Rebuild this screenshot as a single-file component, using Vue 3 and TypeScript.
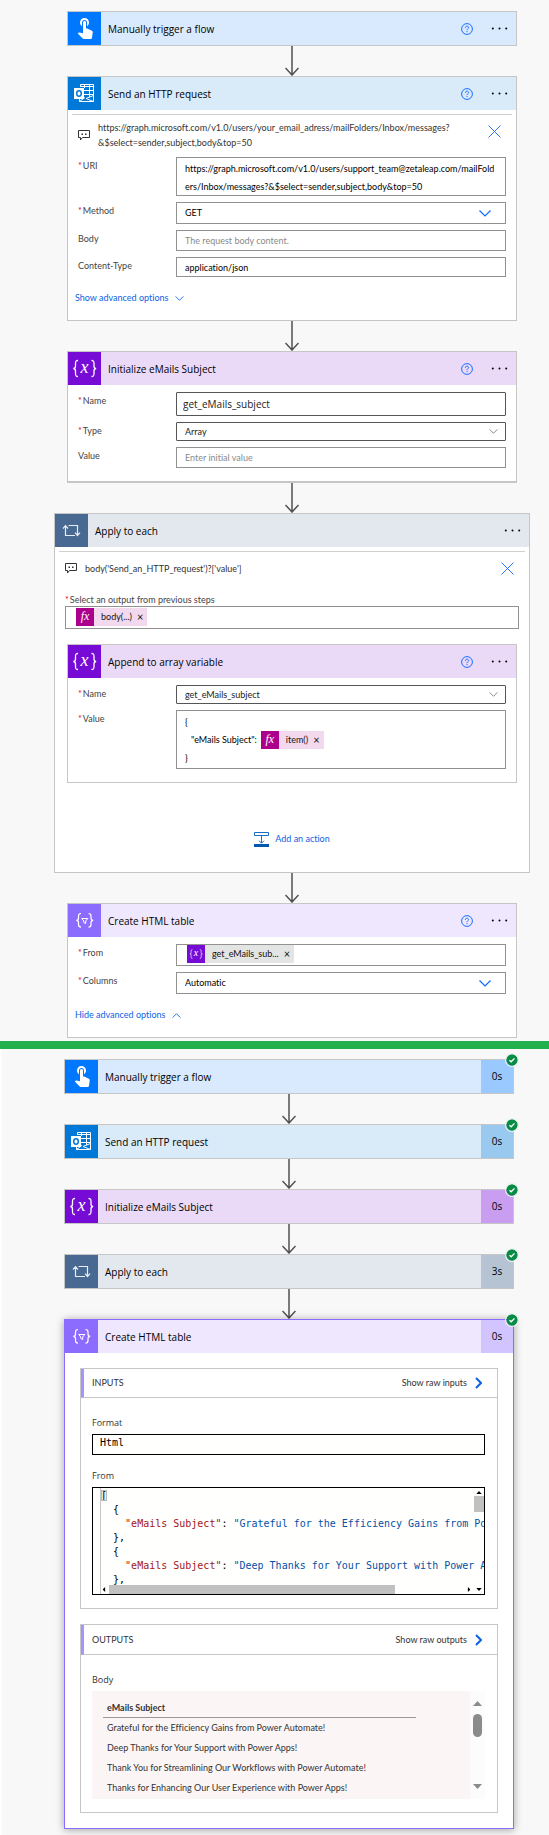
<script setup lang="ts">
import { ref } from 'vue'

interface RunStep {
  title: string
  tone: string
  icon: string
  duration: string
}

const uri = ref('https://graph.microsoft.com/v1.0/users/support_team@zetaleap.com/mailFolders/Inbox/messages?&$select=sender,subject,body&top=50')
const method = ref('GET')
const requestBody = ref('')
const contentType = ref('application/json')
const variableName = ref('get_eMails_subject')
const variableType = ref('Array')
const initialValue = ref('')
const targetVariable = ref('get_eMails_subject')
const columns = ref('Automatic')
const format = ref('Html')

const runSteps: RunStep[] = [
  { title: 'Manually trigger a flow', tone: 'trigger', icon: 'touch', duration: '0s' },
  { title: 'Send an HTTP request', tone: 'outlook', icon: 'outlook', duration: '0s' },
  { title: 'Initialize eMails Subject', tone: 'variable', icon: 'variable', duration: '0s' },
  { title: 'Apply to each', tone: 'control', icon: 'loop', duration: '3s' },
]

const payload = [
  'Grateful for the Efficiency Gains from Power Automate!',
  'Deep Thanks for Your Support with Power Apps!',
]

const subjects = [
  'Grateful for the Efficiency Gains from Power Automate!',
  'Deep Thanks for Your Support with Power Apps!',
  'Thank You for Streamlining Our Workflows with Power Automate!',
  'Thanks for Enhancing Our User Experience with Power Apps!',
]
</script>

<template>
  <svg class="sprite" aria-hidden="true">
    <symbol id="touch" viewBox="0 0 33 33">
      <path transform="translate(5 3)" fill="#fff" d="M9 11.24V7.5C9 6.12 10.12 5 11.5 5S14 6.12 14 7.5v3.74c1.21-.81 2-2.18 2-3.74C16 5.01 13.99 3 11.5 3S7 5.01 7 7.5c0 1.56.79 2.93 2 3.74zm9.84 4.63l-4.54-2.26c-.17-.07-.35-.11-.54-.11H13v-6c0-.83-.67-1.5-1.5-1.5S10 6.67 10 7.5v10.74l-3.43-.72c-.08-.01-.15-.03-.24-.03-.31 0-.59.13-.79.33l-.79.8 4.94 4.94c.27.27.65.44 1.06.44h6.79c.75 0 1.33-.55 1.44-1.28l.75-5.27c.01-.07.02-.14.02-.2 0-.62-.38-1.16-.91-1.38z" />
    </symbol>
    <symbol id="outlook" viewBox="0 0 33 33">
      <g fill="none" stroke="#fff" stroke-width="1">
        <path d="M12.5 10V7.500H25.500V24.500H11.500V22M12.500 9.500H25.500M16 13.500H25.500M16 17.500H25.500M16.500 7.500V11M21.500 7.500V20" />
        <path d="M11.500 24.500L17 20.500M25.500 18.500L18 21.500L25.500 24.500" />
      </g>
      <rect x="6" y="11" width="10" height="11" fill="#fff" />
      <ellipse cx="11" cy="16.500" rx="2.300" ry="2.700" fill="none" stroke="#0078d7" stroke-width="1.500" />
    </symbol>
    <symbol id="variable" viewBox="0 0 33 33">
      <g fill="none" stroke="#fff" stroke-width="1.300">
        <path d="M10 8.500C7.500 8.500 7.500 9.500 7.500 11.500V14C7.500 15.800 7 16.500 5.300 16.500C7 16.500 7.500 17.200 7.500 19V21.500C7.500 23.500 7.500 24.500 10 24.500" />
        <path d="M23.500 8.500C26 8.500 26 9.500 26 11.500V14C26 15.800 26.500 16.500 28.200 16.500C26.500 16.500 26 17.200 26 19V21.500C26 23.500 26 24.500 23.500 24.500" />
      </g>
      <text x="16.500" y="21" text-anchor="middle" fill="#fff" font-family="Liberation Serif, serif" font-style="italic" font-size="18">x</text>
    </symbol>
    <symbol id="loop" viewBox="0 0 33 33">
      <g fill="none" stroke="#e6edf5" stroke-width="1.200">
        <path d="M10.500 12V21.500H20M8 14.500L10.500 11.700L13 14.500" />
        <path d="M13.500 11.500H22.500V21.500M20 18.700L22.500 21.500L25 18.700" />
      </g>
    </symbol>
    <symbol id="filter" viewBox="0 0 33 33">
      <g fill="none" stroke="#fff" stroke-width="1.200">
        <path d="M13 9.500C11 9.500 10.500 10 10.500 12V14C10.500 15.600 10 16.300 8.300 16.300C10 16.300 10.500 17 10.500 18.600V20.500C10.500 22.500 11 23.200 13 23.200" />
        <path d="M20.500 9.500C22.500 9.500 23 10 23 12V14C23 15.600 23.500 16.300 25.200 16.300C23.500 16.300 23 17 23 18.600V20.500C23 22.500 22.500 23.200 20.500 23.200" />
        <path d="M13.700 14.500H19.800L17.700 17V19.500L15.800 18.500V17Z" stroke-width="1" />
      </g>
    </symbol>
    <symbol id="help" viewBox="0 0 12 12">
      <circle cx="6" cy="6" r="5.400" fill="none" stroke="#1a6dff" stroke-width="1" />
      <path d="M4.400 4.900C4.400 3.800 5.100 3.200 6 3.200S7.600 3.800 7.600 4.600C7.600 5.600 6 5.700 6 7.100" fill="none" stroke="#1a6dff" stroke-width="1" />
      <rect x="5.500" y="8.100" width="1" height="1" fill="#1a6dff" />
    </symbol>
    <symbol id="more" viewBox="0 0 17 3">
      <circle cx="1.800" cy="1.500" r="1" /><circle cx="8.500" cy="1.500" r="1" /><circle cx="15.200" cy="1.500" r="1" />
    </symbol>
    <symbol id="note" viewBox="0 0 12 11">
      <path d="M.500.500H11.500V7.500H4.500L2.500 10V7.500H.500Z" fill="none" stroke="#333" />
      <path d="M3.500 3.500H5V5H3.500ZM7 3.500H8.500V5H7Z" fill="#333" />
    </symbol>
    <symbol id="close" viewBox="0 0 13 13">
      <path d="M.500.500L12.500 12.500M12.500.500L.500 12.500" fill="none" stroke="#2f74f5" stroke-width="1" />
    </symbol>
    <symbol id="chevron" viewBox="0 0 12 7">
      <path d="M.500.500L6 6L11.500.500" fill="none" stroke="currentColor" stroke-width="1.200" />
    </symbol>
    <symbol id="arrow" viewBox="0 0 14 30">
      <path d="M7 0V29M.500 22L7 29L13.500 22" fill="none" stroke="#505050" stroke-width="1.500" />
    </symbol>
    <symbol id="check" viewBox="0 0 12 12">
      <circle cx="6" cy="6" r="5.700" fill="#078c46" />
      <path d="M3.500 6.200L5.200 7.800L8.500 4.400" fill="none" stroke="#fff" stroke-width="1.300" />
    </symbol>
    <symbol id="add" viewBox="0 0 15 15">
      <path d="M.500.500H14.500V3.500H.500ZM7.500 3.500V11M5 8.700L7.500 11.200L10 8.700" fill="none" stroke="#1a6fc4" />
      <rect y="12" width="15" height="3" fill="#0058b0" />
    </symbol>
    <symbol id="go" viewBox="0 0 7 12">
      <path d="M1 1L6 6L1 11" fill="none" stroke="#0b62e6" stroke-width="2" />
    </symbol>
    <symbol id="triangle" viewBox="0 0 9 5">
      <path d="M0 5L4.500 0L9 5Z" fill="currentColor" />
    </symbol>
  </svg>

  <main class="page">
    <section class="designer" aria-label="Flow designer">
      <article class="card trigger inset">
        <header class="head">
          <svg class="badge"><use href="#touch" /></svg>
          <h2>Manually trigger a flow</h2>
          <button class="icon-btn help" aria-label="Help"><svg><use href="#help" /></svg></button>
          <button class="icon-btn more" aria-label="More"><svg><use href="#more" /></svg></button>
        </header>
      </article>
      <svg class="arrow"><use href="#arrow" /></svg>

      <article class="card outlook inset">
        <header class="head">
          <svg class="badge"><use href="#outlook" /></svg>
          <h2>Send an HTTP request</h2>
          <button class="icon-btn help" aria-label="Help"><svg><use href="#help" /></svg></button>
          <button class="icon-btn more" aria-label="More"><svg><use href="#more" /></svg></button>
        </header>
        <div class="note">
          <svg class="note-icon"><use href="#note" /></svg>
          <p>https://graph.microsoft.com/v1.0/users/your_email_adress/mailFolders/Inbox/messages?<wbr />&amp;$select=sender,subject,body&amp;top=50</p>
          <button class="icon-btn close" aria-label="Delete comment"><svg><use href="#close" /></svg></button>
        </div>
        <div class="fields">
          <label class="required" for="uri">URI</label>
          <textarea id="uri" v-model="uri" class="box" rows="2"></textarea>
          <label class="required" for="method">Method</label>
          <div class="picker blue">
            <select id="method" v-model="method" class="box mid"><option>GET</option><option>POST</option></select>
            <svg><use href="#chevron" /></svg>
          </div>
          <label for="body">Body</label>
          <input id="body" v-model="requestBody" class="box" placeholder="The request body content." />
          <label for="ctype">Content-Type</label>
          <input id="ctype" v-model="contentType" class="box short" />
        </div>
        <button class="advanced">Show advanced options <svg><use href="#chevron" /></svg></button>
      </article>
      <svg class="arrow"><use href="#arrow" /></svg>

      <article class="card variable inset heavy">
        <header class="head">
          <svg class="badge"><use href="#variable" /></svg>
          <h2>Initialize eMails Subject</h2>
          <button class="icon-btn help" aria-label="Help"><svg><use href="#help" /></svg></button>
          <button class="icon-btn more" aria-label="More"><svg><use href="#more" /></svg></button>
        </header>
        <div class="fields padded">
          <label class="required" for="vname">Name</label>
          <input id="vname" v-model="variableName" class="box dark large" />
          <label class="required" for="vtype">Type</label>
          <div class="picker grey">
            <select id="vtype" v-model="variableType" class="box dark low"><option>Array</option><option>String</option></select>
            <svg><use href="#chevron" /></svg>
          </div>
          <label for="vvalue">Value</label>
          <input id="vvalue" v-model="initialValue" class="box" placeholder="Enter initial value" />
        </div>
      </article>
      <svg class="arrow"><use href="#arrow" /></svg>

      <article class="card control">
        <header class="head">
          <svg class="badge"><use href="#loop" /></svg>
          <h2>Apply to each</h2>
          <button class="icon-btn more" aria-label="More"><svg><use href="#more" /></svg></button>
        </header>
        <div class="note">
          <svg class="note-icon"><use href="#note" /></svg>
          <p>body('Send_an_HTTP_request')?['value']</p>
          <button class="icon-btn close" aria-label="Delete comment"><svg><use href="#close" /></svg></button>
        </div>
        <div class="source">
          <span id="source-label" class="required">Select an output from previous steps</span>
          <div class="box tokens tall" role="textbox" tabindex="0" aria-labelledby="source-label">
            <span class="token fx"><i>fx</i><span>body(...)</span><button aria-label="Remove body">×</button></span>
          </div>
        </div>

        <article class="card variable nested">
          <header class="head">
            <svg class="badge"><use href="#variable" /></svg>
            <h2>Append to array variable</h2>
            <button class="icon-btn help" aria-label="Help"><svg><use href="#help" /></svg></button>
            <button class="icon-btn more" aria-label="More"><svg><use href="#more" /></svg></button>
          </header>
          <div class="fields padded">
            <label class="required" for="aname">Name</label>
            <div class="picker grey">
              <select id="aname" v-model="targetVariable" class="box dark low"><option>get_eMails_subject</option></select>
              <svg><use href="#chevron" /></svg>
            </div>
            <span id="avalue-label" class="required">Value</span>
            <div class="box expression" role="textbox" tabindex="0" aria-labelledby="avalue-label">
              <div>{</div>
              <div class="entry">"eMails Subject": <span class="token fx"><i>fx</i><span>item()</span><button aria-label="Remove item">×</button></span></div>
              <div>}</div>
            </div>
          </div>
        </article>

        <button class="add"><svg><use href="#add" /></svg>Add an action</button>
      </article>
      <svg class="arrow"><use href="#arrow" /></svg>

      <article class="card table inset">
        <header class="head">
          <svg class="badge"><use href="#filter" /></svg>
          <h2>Create HTML table</h2>
          <button class="icon-btn help" aria-label="Help"><svg><use href="#help" /></svg></button>
          <button class="icon-btn more" aria-label="More"><svg><use href="#more" /></svg></button>
        </header>
        <div class="fields top">
          <span id="from-label" class="required">From</span>
          <div class="box tokens" role="textbox" tabindex="0" aria-labelledby="from-label">
            <span class="token var"><svg><use href="#variable" /></svg><span>get_eMails_sub...</span><button aria-label="Remove get_eMails_subject">×</button></span>
          </div>
          <label class="required" for="columns">Columns</label>
          <div class="picker blue">
            <select id="columns" v-model="columns" class="box mid"><option>Automatic</option><option>Custom</option></select>
            <svg><use href="#chevron" /></svg>
          </div>
        </div>
        <button class="advanced open">Hide advanced options <svg><use href="#chevron" /></svg></button>
      </article>
    </section>

    <section class="run" aria-label="Run history">
      <template v-for="step in runSteps" :key="step.title">
        <article class="card" :class="step.tone">
          <header class="head">
            <svg class="badge"><use :href="'#' + step.icon" /></svg>
            <h2>{{ step.title }}</h2>
            <span class="duration">{{ step.duration }}</span>
          </header>
          <svg class="status" role="img" aria-label="Succeeded"><use href="#check" /></svg>
        </article>
        <svg class="arrow"><use href="#arrow" /></svg>
      </template>

      <article class="card table selected">
        <header class="head">
          <svg class="badge"><use href="#filter" /></svg>
          <h2>Create HTML table</h2>
          <span class="duration">0s</span>
        </header>
        <svg class="status" role="img" aria-label="Succeeded"><use href="#check" /></svg>
        <div class="panels">
          <section class="panel">
            <header>
              <h3>INPUTS</h3>
              <a href="#raw-inputs">Show raw inputs<svg><use href="#go" /></svg></a>
            </header>
            <div class="content">
              <label for="format">Format</label>
              <input id="format" v-model="format" class="format" readonly />
              <h4>From</h4>
              <div class="editor">
                <pre><span class="bracket">[</span>
<template v-for="line in payload" :key="line">  {
    <span class="key">"eMails Subject"</span>: <span class="string">"{{ line }}"</span>
  },
</template>  {</pre>
                <div class="vbar"><svg><use href="#triangle" /></svg><i></i><svg class="down"><use href="#triangle" /></svg></div>
                <div class="hbar"><svg class="left"><use href="#triangle" /></svg><i></i><svg class="right"><use href="#triangle" /></svg></div>
              </div>
            </div>
          </section>

          <section class="panel">
            <header>
              <h3>OUTPUTS</h3>
              <a href="#raw-outputs">Show raw outputs<svg><use href="#go" /></svg></a>
            </header>
            <div class="content">
              <h4>Body</h4>
              <div class="result">
                <div class="sheet">
                  <table>
                    <thead><tr><th scope="col">eMails Subject</th></tr></thead>
                    <tbody><tr v-for="subject in subjects" :key="subject"><td>{{ subject }}</td></tr></tbody>
                  </table>
                </div>
                <div class="scroll"><svg><use href="#triangle" /></svg><i></i><svg class="down"><use href="#triangle" /></svg></div>
              </div>
            </div>
          </section>
        </div>
      </article>
    </section>
  </main>
</template>

<style>
body {
  margin: 0;
  background: #f8f8f8;
}
</style>

<style scoped>
* {
  box-sizing: border-box;
}
.sprite {
  display: none;
}
.page {
  font: 9px/18px Lato, "Open Sans", sans-serif;
  font-variant-ligatures: none;
  color: #333;
  background: #f8f8f8;
}
svg {
  display: block;
  flex: none;
}
button,
input,
select,
textarea {
  font: inherit;
  font-variant-ligatures: none;
  color: inherit;
  margin: 0;
}
button {
  border: 0;
  padding: 0;
  background: none;
}
h2,
h3,
h4,
p,
pre {
  margin: 0;
  font-weight: 400;
}
.designer {
  padding: 11px 19px 3px 54px;
  border-bottom: 8px solid #22b14c;
}
.run {
  padding: 10px 35px 6px 62px;
  border-left: 2px solid #fdfdfd;
}

/* cards */
.card {
  position: relative;
  border: 1px solid #c6c6c6;
  background: #fff;
}
.inset {
  margin: 0 13px;
}
.heavy {
  border-bottom-width: 2px;
}
.nested {
  margin: 15px 12px 0;
}
.trigger { --tint: #d9eaff; --solid: #0077ff; --mid: #99c9ff; }
.outlook { --tint: #d9eaf8; --solid: #0078d7; --mid: #99c9ef; }
.variable { --tint: #ebdaf7; --solid: #770bd6; --mid: #c99df0; }
.control { --tint: #e3e8ef; --solid: #486991; --mid: #b6c3d3; }
.table { --tint: #eee7fe; --solid: #8c6cff; --mid: #d1c4ff; }
.head {
  display: flex;
  align-items: center;
  height: 33px;
  background: var(--tint);
}
.badge {
  width: 33px;
  height: 33px;
  background: var(--solid);
}
.head h2 {
  flex: 1;
  padding-left: 7px;
  font-family: "Open Sans", sans-serif;
  font-size: 10px;
  color: #000;
}
.icon-btn {
  display: flex;
  align-items: center;
}
.help svg {
  width: 12px;
  height: 12px;
}
.more {
  margin: 0 8px 0 18px;
}
.more svg {
  width: 17px;
  height: 3px;
}
.arrow {
  width: 14px;
  height: 30px;
  margin: 0 auto;
}
.note {
  display: flex;
  align-items: center;
  margin: 4px 4px 0;
  padding: 5px 11px 7px 6px;
  border-top: 1px solid #cfcfcf;
  line-height: 15px;
}
.note-icon {
  width: 12px;
  height: 11px;
}
.note p {
  flex: 1;
  padding-left: 8px;
}
.close {
  height: 23px;
  align-self: flex-start;
}
.close svg {
  width: 13px;
  height: 13px;
}

/* form rows */
.fields {
  display: grid;
  grid-template-columns: 98px minmax(0, 1fr);
  gap: 6px 0;
  padding: 0 10px;
  align-items: start;
  color: #444;
}
.padded {
  padding: 7px 10px 13px;
}
.top {
  padding-top: 7px;
}
.required::before {
  content: "*";
  margin-right: 1px;
  color: #e00b1c;
}
.box {
  display: block;
  width: 100%;
  height: 21px;
  padding: 0 8px;
  border: 1px solid #919191;
  border-radius: 0;
  background: #fff;
  color: #000;
  outline: 0;
}
.box::placeholder {
  color: #8a8a8a;
  opacity: 1;
}
textarea.box {
  height: 39px;
  line-height: 18px;
  resize: none;
  overflow: hidden;
  word-break: break-all;
  padding: 2px 8px 0;
}
.dark {
  border-color: #555;
  border-radius: 1px;
  color: #222;
}
.large {
  height: 24px;
  padding: 0 6px;
  font-family: "Open Sans", sans-serif;
  font-size: 10px;
}
.mid {
  height: 22px;
}
.short {
  height: 20px;
}
.low {
  height: 19px;
}
select.box {
  appearance: none;
}
.picker {
  display: grid;
  align-items: center;
}
.picker > * {
  grid-area: 1 / 1;
}
.picker svg {
  justify-self: end;
  width: 12px;
  height: 7px;
  margin-right: 15px;
  pointer-events: none;
}
.blue {
  color: #0b6cff;
}
.grey {
  color: #777;
}
.picker.grey svg {
  width: 9px;
  height: 5px;
  margin-right: 8px;
}
.advanced {
  display: flex;
  align-items: center;
  gap: 7px;
  height: 16px;
  margin: 13px 7px 14px;
  color: #0b62e6;
}
.advanced svg {
  width: 9px;
  height: 5px;
}
.open svg {
  transform: rotate(180deg);
}

/* tokens */
.source {
  padding: 7px 10px 0;
  line-height: 12px;
  color: #444;
}
.source > span {
  display: block;
}
.tokens {
  display: flex;
  align-items: flex-start;
  height: 22px;
  padding: 0 10px;
}
.tall {
  height: 23px;
  padding-top: 1px;
}
.token {
  display: inline-flex;
  align-items: center;
  height: 18px;
  padding-right: 4px;
  line-height: 18px;
  color: #111;
}
.token > i,
.token > svg {
  width: 18px;
  height: 18px;
  margin-right: 7px;
  text-align: center;
  font: italic 12px/17px "Liberation Serif", serif;
  color: #fff;
}
.token button {
  margin-left: 5px;
  font-size: 11px;
  line-height: 18px;
}
.fx {
  background: #f3d9ee;
}
.fx > i {
  background: #ac008c;
}
.var {
  background: #e3e5e4;
}
.var > svg {
  background: #770bd6;
}
.expression {
  height: 59px;
  padding: 2px 8px 0;
}
.entry {
  display: flex;
  align-items: center;
  gap: 4px;
  padding-left: 6px;
}
.add {
  display: flex;
  align-items: center;
  gap: 6px;
  height: 16px;
  margin: 48px auto 25px;
  color: #0b62e6;
}
.add svg {
  width: 15px;
  height: 15px;
}

/* run history */
.duration {
  align-self: stretch;
  width: 32px;
  line-height: 33px;
  text-align: center;
  font-family: "Open Sans", sans-serif;
  font-size: 10px;
  color: #000;
  background: var(--mid);
}
.status {
  position: absolute;
  top: -6px;
  right: -5px;
  width: 12px;
  height: 12px;
  border-radius: 50%;
  box-shadow: 0 0 0 1px #e8f3ec;
}
.selected {
  border-color: #8c6cff;
  box-shadow: 0 1px 8px rgba(0, 0, 0, 0.35);
}
.panels {
  display: grid;
  gap: 15px;
  padding: 15px;
}
.panel {
  min-width: 0;
  border: 1px solid #c6c6c6;
}
.panel > header {
  display: flex;
  align-items: center;
  justify-content: space-between;
  height: 29px;
  padding: 0 15px 0 8px;
  border-left: 3px solid #a992ff;
  border-bottom: 1px solid #c6c6c6;
}
.panel:last-child > header {
  height: 30px;
}
.panel h3 {
  font-size: 9px;
}
.panel a {
  display: flex;
  align-items: center;
  gap: 8px;
  color: #333;
  text-decoration: none;
}
.panel a svg {
  width: 7px;
  height: 12px;
}
.content {
  padding: 17px 12px 13px 11px;
}
.content label,
.content h4 {
  display: block;
  margin-bottom: 3px;
  font: 500 9px/16px "Open Sans", sans-serif;
}
.format {
  display: block;
  width: 100%;
  height: 21px;
  margin-bottom: 13px;
  padding: 0 7px 5px;
  border: 1px solid #000;
  background: #fffffe;
  color: #000;
  font: 10px/14px "DejaVu Sans Mono", monospace;
}
.editor {
  position: relative;
  height: 108px;
  overflow: hidden;
  border: 1px solid #000;
  background: #fffffe;
}
.editor pre {
  margin-left: 7px;
  padding-top: 1px;
  border-left: 1px solid #c8c8c8;
  font: 10px/14px "DejaVu Sans Mono", monospace;
  color: #000;
}
.bracket {
  outline: 1px solid #b9b9b9;
  outline-offset: -1px;
  background: #e7f0e7;
}
.key {
  color: #a31515;
}
.string {
  color: #0451a5;
}
.vbar {
  position: absolute;
  top: 0;
  right: 0;
  bottom: 0;
  display: flex;
  flex-direction: column;
  align-items: center;
  width: 10px;
  padding: 3px 0;
  color: #000;
}
.vbar svg,
.hbar svg {
  width: 6px;
  height: 3px;
}
.vbar i {
  width: 10px;
  height: 16px;
  margin: 2px 0 auto;
  background: #c1c1c1;
}
.hbar {
  position: absolute;
  left: 8px;
  right: 12px;
  bottom: 0;
  display: flex;
  align-items: center;
  height: 9px;
  color: #000;
}
.hbar i {
  width: 77%;
  height: 9px;
  margin: 0 auto 0 2px;
  background: #c1c1c1;
}
.down {
  transform: rotate(180deg);
}
.left {
  transform: rotate(-90deg);
}
.right {
  transform: rotate(90deg);
}
.result {
  display: flex;
  height: 108px;
}
.sheet {
  flex: 1;
  padding: 8px 54px 0 11px;
  overflow: hidden;
  background: #fcf5f5;
}
.sheet table {
  width: 100%;
  border-collapse: separate;
  border-spacing: 0;
}
.sheet th {
  height: 19px;
  padding: 0 4px;
  border-bottom: 1px solid #999;
  text-align: left;
  font-weight: 700;
}
.sheet td {
  height: 20px;
  padding: 0 4px;
}
.scroll {
  display: flex;
  flex-direction: column;
  align-items: center;
  width: 15px;
  padding: 10px 0;
  background: #fcfcfc;
  color: #8b8b8b;
}
.scroll svg {
  width: 9px;
  height: 5px;
}
.scroll i {
  width: 9px;
  height: 23px;
  margin: 8px 0 auto;
  border-radius: 5px;
  background: #8b8b8b;
}
</style>
